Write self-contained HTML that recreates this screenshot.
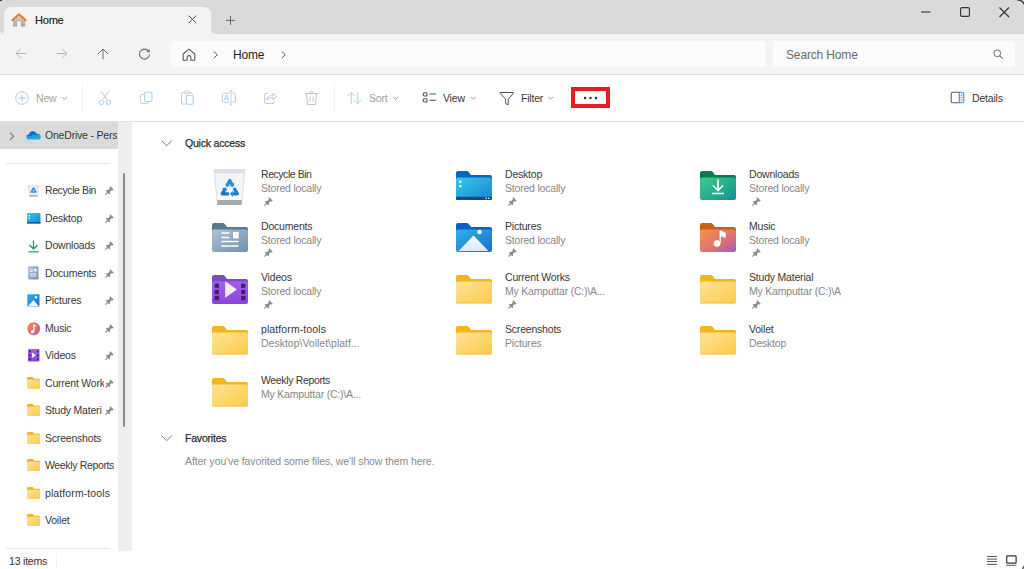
<!DOCTYPE html>
<html><head><meta charset="utf-8">
<style>
*{box-sizing:border-box;margin:0;padding:0}
html,body{width:1024px;height:569px;overflow:hidden;background:#fff}
body{position:relative;font-family:"Liberation Sans",sans-serif;font-size:10.5px;color:#383838;letter-spacing:-0.2px}
.a{position:absolute}
.t{position:absolute;white-space:nowrap;line-height:12px}
svg{position:absolute;overflow:visible}
#title{left:0;top:0;width:1024px;height:33px;background:#dadada}
#tab{left:4px;top:7px;width:207px;height:27px;background:#f3f3f3;border-radius:7px 7px 0 0}
#addrrow{left:0;top:34px;width:1024px;height:41px;background:#f3f3f3;border-bottom:1px solid #dcdcdc}
#addr{left:171px;top:40.7px;width:595px;height:26.7px;background:#fbfbfb;border-radius:4px}
#search{left:773px;top:40.7px;width:242px;height:26.7px;background:#fbfbfb;border-radius:4px}
#cmdline{left:0;top:121px;width:1024px;height:1px;background:#e0e0e0}
#odhl{left:0;top:122px;width:118px;height:27px;background:#dadada}
#track{left:118px;top:122px;width:14px;height:429px;background:#eeeeee}
#thumb{left:123px;top:173px;width:2px;height:254px;background:#8a8a8a;border-radius:1px}
.sep{position:absolute;background:#e3e3e3}
.gray{color:#a0a0a0}
.sb{-webkit-text-stroke:0.25px #1c1c1c}
.desc{color:#878787}
</style></head><body>
<svg width="0" height="0" style="position:absolute">
<defs>
 <linearGradient id="gYel" x1="0" y1="0" x2="1" y2="1"><stop offset="0" stop-color="#ffe39a"/><stop offset="1" stop-color="#fbca45"/></linearGradient>
 <linearGradient id="gDesk" x1="0" y1="0" x2="1" y2="1"><stop offset="0" stop-color="#35c9e6"/><stop offset="1" stop-color="#1b84d2"/></linearGradient>
 <linearGradient id="gDown" x1="0" y1="0" x2="1" y2="1"><stop offset="0" stop-color="#40c98c"/><stop offset="1" stop-color="#0f9390"/></linearGradient>
 <linearGradient id="gDoc" x1="0" y1="0" x2="1" y2="1"><stop offset="0" stop-color="#adc2d8"/><stop offset="1" stop-color="#7190ae"/></linearGradient>
 <linearGradient id="gPic" x1="0" y1="0" x2="1" y2="1"><stop offset="0" stop-color="#2fb1ec"/><stop offset="1" stop-color="#1670cc"/></linearGradient>
 <linearGradient id="gMus" x1="0" y1="0" x2="1" y2="1"><stop offset="0" stop-color="#f78f4c"/><stop offset="0.6" stop-color="#de7070"/><stop offset="1" stop-color="#9a5ac8"/></linearGradient>
 <linearGradient id="gVid" x1="0" y1="0" x2="0" y2="1"><stop offset="0" stop-color="#a660ea"/><stop offset="1" stop-color="#8a44dc"/></linearGradient>
 <linearGradient id="gMtn" x1="0" y1="0" x2="0" y2="1"><stop offset="0" stop-color="#ffffff"/><stop offset="1" stop-color="#d6e8f8"/></linearGradient>
 <linearGradient id="gBin" x1="0" y1="0" x2="0" y2="1"><stop offset="0" stop-color="#eef0f2"/><stop offset="1" stop-color="#fbfbfb"/></linearGradient>
 <linearGradient id="gCloud" x1="0.2" y1="0" x2="0.5" y2="1"><stop offset="0" stop-color="#0662bc"/><stop offset="0.5" stop-color="#0b78d4"/><stop offset="0.52" stop-color="#1e9ae6"/><stop offset="1" stop-color="#2aa8ec"/></linearGradient>
 <g id="backY"><path d="M0 2Q0 0 2 0H10.5Q12 0 13 1.2L15 4H34Q36 4 36 6V10H0Z"/></g>
 <g id="fold">
  <path d="M0 2Q0 0 2 0H10.5Q12 0 13 1.2L15 4H34Q36 4 36 6V10H0Z" fill="#f3b51c"/>
  <rect x="0" y="6.5" width="36" height="22" rx="2" fill="url(#gYel)"/>
  <rect x="0" y="27.5" width="36" height="1" rx="0.5" fill="#efb93a" opacity="0.6"/>
 </g>
 <g id="sfold">
  <path d="M0 1.2Q0 0 1.2 0H5Q6 0 6.5 0.8L7.2 1.8H12Q13 1.8 13 2.8V4H0Z" fill="#f3b51c"/>
  <rect x="0" y="2.8" width="13" height="9.2" rx="1" fill="url(#gYel)"/>
 </g>
 <g id="pin"><path d="M5.3 0.2L8.8 3.7L7.6 4.5L6.5 4.2L5 5.7L5.1 7.4L4.2 8.2L2.9 6.9L0.8 9L0 8.2L2.1 6.1L0.8 4.8L1.6 3.9L3.3 4L4.8 2.5L4.5 1.4Z" fill="#8c8c8c"/></g>
 <g id="chev"><path d="M0 0L2.5 2.3L5 0" fill="none" stroke="#9a9a9a" stroke-width="0.9"/></g>
</defs>
</svg>

<div id="title" class="a"></div>
<div id="addrrow" class="a"></div>
<div class="a" style="left:0;top:33px;width:1024px;height:1px;background:#d5d5d5"></div>
<div id="tab" class="a"></div>
<div id="addr" class="a"></div>
<div id="search" class="a"></div>
<div id="cmdline" class="a"></div>
<div id="odhl" class="a"></div>
<div id="track" class="a"></div>
<div id="thumb" class="a"></div>

<!-- ===== TITLE BAR ===== -->
<div class="a" style="left:0;top:0;width:2px;height:1px;background:#404040"></div>
<svg style="left:1014px;top:-1px" width="12" height="10" viewBox="0 0 12 10"><path d="M3 0.8Q9 1 10.6 6" fill="none" stroke="#303030" stroke-width="1.3"/></svg>
<svg style="left:0;top:28px" width="220" height="6" viewBox="0 0 220 6"><path d="M0 5.5V1A4 4 0 0 0 4 5V5.5Z" fill="#f3f3f3"/><path d="M211 5.5V1A4 4 0 0 0 215 5V5.5Z" fill="#f3f3f3"/></svg>
<svg style="left:11px;top:12px" width="16" height="16" viewBox="0 0 16 16">
 <defs><linearGradient id="gHouse" x1="0" y1="0" x2="0" y2="1"><stop offset="0" stop-color="#d8d8d8"/><stop offset="1" stop-color="#a2a2a2"/></linearGradient></defs>
 <path d="M2 7.8L8 2.8L14.2 7.8V14.6H9.9V9.6H6V14.6H2Z" fill="url(#gHouse)"/>
 <path d="M1.3 8.2L8 2.2L14.7 8.2" fill="none" stroke="#ee7a1c" stroke-width="1.9" stroke-linejoin="round" stroke-linecap="round"/>
</svg>
<div class="t" style="left:35px;top:14px;font-size:11px;color:#202020;-webkit-text-stroke:0.15px #202020">Home</div>
<svg style="left:188px;top:15px" width="9" height="9" viewBox="0 0 9 9"><path d="M0.6 0.6L8.2 8.2M8.2 0.6L0.6 8.2" stroke="#505050" stroke-width="1"/></svg>
<svg style="left:226px;top:16px" width="9" height="9" viewBox="0 0 9 9"><path d="M4.5 0V8.8M0 4.4H8.8" stroke="#5a5a5a" stroke-width="0.9"/></svg>
<svg style="left:921px;top:11px" width="10" height="2" viewBox="0 0 10 2"><path d="M0 1H9.5" stroke="#303030" stroke-width="1.1"/></svg>
<svg style="left:960px;top:7px" width="10" height="10" viewBox="0 0 10 10"><rect x="0.6" y="0.6" width="8.8" height="8.8" rx="1.3" fill="none" stroke="#303030" stroke-width="1.1"/></svg>
<svg style="left:999px;top:7px" width="11" height="11" viewBox="0 0 11 11"><path d="M0.5 0.5L10 10M10 0.5L0.5 10" stroke="#303030" stroke-width="1.1"/></svg>

<!-- ===== ADDRESS ROW ===== -->
<svg style="left:15px;top:48px" width="12" height="12" viewBox="0 0 12 12"><path d="M11.5 5.5H1.2M5.8 0.8L1 5.5L5.8 10.2" fill="none" stroke="#b4b4b4" stroke-width="1"/></svg>
<svg style="left:56px;top:48px" width="12" height="12" viewBox="0 0 12 12"><path d="M0.5 5.5H10.8M6.2 0.8L11 5.5L6.2 10.2" fill="none" stroke="#b4b4b4" stroke-width="1"/></svg>
<svg style="left:97px;top:48px" width="12" height="12" viewBox="0 0 12 12"><path d="M6 11V1.2M1 6L6 1L11 6" fill="none" stroke="#6a6a6a" stroke-width="1"/></svg>
<svg style="left:138px;top:48px" width="13" height="13" viewBox="0 0 13 13"><path d="M10.6 3.2A5 5 0 1 0 11.5 6.5" fill="none" stroke="#6a6a6a" stroke-width="1.1"/><path d="M11.6 1V4.3H8.3Z" fill="#6a6a6a"/></svg>
<svg style="left:182px;top:48px" width="14" height="14" viewBox="0 0 14 14"><path d="M1.2 12.2V6L7 1.2L12.8 6V12.2H8.8V8.8Q8.8 7.6 7 7.6Q5.2 7.6 5.2 8.8V12.2Z" fill="none" stroke="#5a5a5a" stroke-width="1.1" stroke-linejoin="round"/></svg>
<svg style="left:213px;top:51px" width="6" height="8" viewBox="0 0 6 8"><path d="M0.8 0.5L4.3 3.8L0.8 7.1" fill="none" stroke="#5a5a5a" stroke-width="1"/></svg>
<div class="t" style="left:233px;top:48.5px;font-size:12px;color:#1e1e1e">Home</div>
<svg style="left:281px;top:51px" width="6" height="8" viewBox="0 0 6 8"><path d="M0.8 0.5L4.3 3.8L0.8 7.1" fill="none" stroke="#5a5a5a" stroke-width="1"/></svg>
<div class="t" style="left:786px;top:48.7px;color:#6a6a6a;font-size:12px;letter-spacing:-0.15px">Search Home</div>
<svg style="left:993px;top:49px" width="11" height="11" viewBox="0 0 11 11"><circle cx="4.3" cy="4.3" r="3.4" fill="none" stroke="#707070" stroke-width="1"/><path d="M6.8 6.8L9.6 9.6" stroke="#707070" stroke-width="1.1"/></svg>

<!-- ===== COMMAND BAR ===== -->
<svg style="left:15px;top:91px" width="14" height="14" viewBox="0 0 14 14"><circle cx="7" cy="7" r="6.3" fill="none" stroke="#c4c4c4" stroke-width="1"/><path d="M7 3.5V10.5M3.5 7H10.5" stroke="#9ccbf0" stroke-width="1"/></svg>
<div class="t gray" style="left:36px;top:92px">New</div>
<svg style="left:62px;top:97px" width="6" height="4"><use href="#chev"/></svg>
<div class="sep" style="left:82px;top:84px;width:1px;height:28px;background:#f0f0f0"></div>
<!-- cut -->
<svg style="left:98px;top:90px" width="14" height="16" viewBox="0 0 14 16"><path d="M3 1.2L8.8 9M11 1.2L5.2 9" stroke="#c8c8c8" stroke-width="1"/><circle cx="3.5" cy="12.3" r="2.3" fill="none" stroke="#a8d0f2" stroke-width="1"/><circle cx="10.5" cy="12.3" r="2.3" fill="none" stroke="#a8d0f2" stroke-width="1"/></svg>
<!-- copy -->
<svg style="left:139px;top:91px" width="15" height="14" viewBox="0 0 15 14"><path d="M5 3.5H3Q1.5 3.5 1.5 5V10.8Q1.5 12.5 3.2 12.5H7.5Q9 12.5 9 11" fill="none" stroke="#c8c8c8" stroke-width="1"/><rect x="5.5" y="1.2" width="7.5" height="9.3" rx="1.6" fill="none" stroke="#a8d0f2" stroke-width="1.1"/></svg>
<!-- paste -->
<svg style="left:180px;top:90px" width="15" height="16" viewBox="0 0 15 16"><path d="M5 14H2.5Q1.5 14 1.5 13V3.5Q1.5 2.5 2.5 2.5H11Q12 2.5 12 3.5V4" fill="none" stroke="#c8c8c8" stroke-width="1"/><rect x="4.2" y="1.2" width="5" height="2.3" rx="1" fill="#fff" stroke="#c8c8c8" stroke-width="1"/><rect x="6.2" y="5.2" width="7" height="9" rx="1.3" fill="none" stroke="#a8d0f2" stroke-width="1.1"/></svg>
<!-- rename -->
<svg style="left:221px;top:90px" width="16" height="16" viewBox="0 0 16 16"><path d="M8.5 3.2H2.6Q1.3 3.2 1.3 4.5V11Q1.3 12.3 2.6 12.3H8.5M11.5 3.2H13Q14.4 3.2 14.4 4.5V11Q14.4 12.3 13 12.3H11.5" fill="none" stroke="#c8c8c8" stroke-width="1"/><path d="M3.3 10.5L5.5 4.8L7.7 10.5M4.1 8.6H6.9" fill="none" stroke="#a8d0f2" stroke-width="1"/><path d="M10 1V15M8.5 1H11.5M8.5 15H11.5" fill="none" stroke="#a8d0f2" stroke-width="1"/></svg>
<!-- share -->
<svg style="left:263px;top:91px" width="15" height="14" viewBox="0 0 15 14"><path d="M5 2.5H2.8Q1.5 2.5 1.5 3.8V11Q1.5 12.5 3 12.5H10Q11.3 12.5 11.3 11.2V10" fill="none" stroke="#c8c8c8" stroke-width="1"/><path d="M3.5 9Q4.5 4.5 10 4.5V2L13.5 5.5L10 9V6.6Q6 6.6 3.5 9Z" fill="none" stroke="#a8d0f2" stroke-width="1" stroke-linejoin="round"/></svg>
<!-- delete -->
<svg style="left:304px;top:90px" width="15" height="16" viewBox="0 0 15 16"><path d="M1 3.5H14M5.8 3.2Q5.8 1.5 7.5 1.5Q9.2 1.5 9.2 3.2M2.5 3.7L3.5 14.5H11.5L12.5 3.7M6 6.5V11.5M9 6.5V11.5" fill="none" stroke="#c4c4c4" stroke-width="1"/></svg>
<div class="sep" style="left:334px;top:84px;width:1px;height:28px;background:#f0f0f0"></div>
<!-- sort -->
<svg style="left:347px;top:91px" width="16" height="14" viewBox="0 0 16 14"><path d="M4.3 12.5V1.5M0.8 5L4.3 1.5L7.8 5" fill="none" stroke="#c8c8c8" stroke-width="1"/><path d="M10.8 1.5V12.5M7.3 9L10.8 12.5L14.3 9" fill="none" stroke="#a8d0f2" stroke-width="1"/></svg>
<div class="t gray" style="left:369px;top:92px">Sort</div>
<svg style="left:393px;top:97px" width="6" height="4"><use href="#chev"/></svg>
<!-- view -->
<svg style="left:422px;top:91px" width="15" height="13" viewBox="0 0 15 13"><rect x="1.3" y="1.8" width="3.7" height="3.2" rx="1" fill="none" stroke="#505050" stroke-width="1.1"/><rect x="1.3" y="7.8" width="3.7" height="3.2" rx="1" fill="none" stroke="#505050" stroke-width="1.1"/><path d="M7.5 3H14M7.5 9.3H14" stroke="#505050" stroke-width="1.1"/></svg>
<div class="t" style="left:443px;top:92px">View</div>
<svg style="left:471px;top:97px" width="6" height="4"><use href="#chev"/></svg>
<!-- filter -->
<svg style="left:499px;top:91px" width="16" height="15" viewBox="0 0 16 15"><path d="M1.3 1.5H14.3V2.6L9.2 8.2V13.8L6.6 12.6V8.2L1.3 2.6Z" fill="none" stroke="#505050" stroke-width="1" stroke-linejoin="round"/></svg>
<div class="t" style="left:521px;top:92px">Filter</div>
<svg style="left:548px;top:97px" width="6" height="4"><use href="#chev"/></svg>
<!-- more -->
<div class="sep" style="left:568px;top:84px;width:1px;height:27px;background:#f6f6f6"></div>
<div class="a" style="left:571px;top:87px;width:39px;height:21px;border:4px solid #ea1a22"></div>
<svg style="left:580px;top:94px" width="20" height="8" viewBox="0 0 20 8"><circle cx="5" cy="4" r="1.2" fill="#2a2a2a"/><circle cx="10.5" cy="4" r="1.2" fill="#2a2a2a"/><circle cx="16" cy="4" r="1.2" fill="#2a2a2a"/></svg>
<!-- details -->
<svg style="left:950px;top:91px" width="15" height="13" viewBox="0 0 15 13"><path d="M9.3 1.2H3Q1.2 1.2 1.2 3V10Q1.2 11.8 3 11.8H9.3" fill="none" stroke="#606060" stroke-width="1.1"/><path d="M9.3 1.2H12Q13.8 1.2 13.8 3V10Q13.8 11.8 12 11.8H9.3Z" fill="#eaf3fb" stroke="#3c8ee0" stroke-width="1.1"/><path d="M10.8 4H12.5M10.8 6.5H12.5M10.8 9H12.5" stroke="#3c8ee0" stroke-width="0.8"/></svg>
<div class="t" style="left:972px;top:92px">Details</div>

<!-- ===== NAV ===== -->
<svg style="left:9px;top:132px" width="6" height="9" viewBox="0 0 6 9"><path d="M1 0.6L4.6 4.2L1 7.8" fill="none" stroke="#7c7c7c" stroke-width="1.2"/></svg>
<svg style="left:26px;top:130px" width="15" height="10" viewBox="0 0 15 10"><path d="M3.2 9.6Q0.3 9.6 0.3 7.1Q0.3 4.6 3 4.6Q3.6 1.3 6.9 1.3Q9.4 1.3 10.4 3.6Q14.7 3.6 14.7 6.7Q14.7 9.6 11.7 9.6Z" fill="url(#gCloud)"/></svg>
<div class="t" style="left:45px;top:129px;width:72px;overflow:hidden">OneDrive - Personal</div>
<div class="sep" style="left:6px;top:163px;width:104px;height:1px"></div>

<!-- nav icons -->
<svg style="left:28px;top:185px" width="11" height="12" viewBox="0 0 11 12"><path d="M0.5 0.8H10.5L9.5 11.5H1.5Z" fill="#eef0f2" stroke="#c8ccd0" stroke-width="0.6"/><rect x="1.5" y="10.2" width="8" height="1.4" fill="#a8a8a8"/><path d="M5.5 3L3.1 7.1H7.9Z" fill="none" stroke="#3592e6" stroke-width="1.5" stroke-linejoin="round"/></svg>
<svg style="left:27px;top:213px" width="14" height="11" viewBox="0 0 14 11"><rect x="0" y="0" width="13.5" height="10.5" rx="1" fill="url(#gDesk)"/><rect x="0" y="9" width="13.5" height="1.5" fill="#0d5a9a"/><rect x="1.5" y="2" width="1.3" height="1.3" fill="#fff"/><rect x="1.5" y="4.5" width="1.3" height="1.3" fill="#fff"/></svg>
<svg style="left:28px;top:240px" width="11" height="13" viewBox="0 0 11 13"><path d="M5.5 0.5V8.8M1.5 5L5.5 9L9.5 5" fill="none" stroke="#1c9a6a" stroke-width="1.3"/><path d="M0.5 11.8H10.5" stroke="#2fb885" stroke-width="1.5"/></svg>
<svg style="left:28px;top:266px" width="11" height="14" viewBox="0 0 11 14"><rect x="0.2" y="0.2" width="10.3" height="13.3" rx="1" fill="url(#gDoc)"/><path d="M2 3.5H5M2 5.5H5M2 8H8.5M2 10H8.5" stroke="#fff" stroke-width="0.9"/><rect x="6" y="2.8" width="2.6" height="2.6" fill="#fff"/></svg>
<svg style="left:27px;top:294px" width="13" height="13" viewBox="0 0 13 13"><rect x="0.3" y="0.3" width="12.2" height="12.2" rx="1" fill="url(#gPic)"/><path d="M1 12.2L6.4 6L11.8 12.2Z" fill="#f3f8fd"/><circle cx="9" cy="3.3" r="1.2" fill="#fff"/></svg>
<svg style="left:27px;top:322px" width="14" height="14" viewBox="0 0 14 14"><circle cx="6.7" cy="6.7" r="6.5" fill="url(#gMus)"/><path d="M6.8 9.5V3.2L9.2 4" fill="none" stroke="#fff" stroke-width="1.2"/><circle cx="5.5" cy="9.7" r="1.6" fill="#fff"/></svg>
<svg style="left:28px;top:349px" width="12" height="13" viewBox="0 0 12 13"><rect x="0" y="0" width="11.5" height="12.5" rx="1" fill="url(#gVid)"/><rect x="1" y="1.5" width="1.6" height="1.8" fill="#3d2070"/><rect x="1" y="5.4" width="1.6" height="1.8" fill="#3d2070"/><rect x="1" y="9.3" width="1.6" height="1.8" fill="#3d2070"/><rect x="8.9" y="1.5" width="1.6" height="1.8" fill="#3d2070"/><rect x="8.9" y="5.4" width="1.6" height="1.8" fill="#3d2070"/><rect x="8.9" y="9.3" width="1.6" height="1.8" fill="#3d2070"/><path d="M4 3.5L8 6.3L4 9.1Z" fill="#fff"/></svg>
<svg style="left:27px;top:377px" width="13" height="12" viewBox="0 0 13 12"><use href="#sfold"/></svg>
<svg style="left:27px;top:404px" width="13" height="12" viewBox="0 0 13 12"><use href="#sfold"/></svg>
<svg style="left:27px;top:432px" width="13" height="12" viewBox="0 0 13 12"><use href="#sfold"/></svg>
<svg style="left:27px;top:459px" width="13" height="12" viewBox="0 0 13 12"><use href="#sfold"/></svg>
<svg style="left:27px;top:487px" width="13" height="12" viewBox="0 0 13 12"><use href="#sfold"/></svg>
<svg style="left:27px;top:514px" width="13" height="12" viewBox="0 0 13 12"><use href="#sfold"/></svg>

<div class="t" style="left:45px;top:184px;letter-spacing:-0.4px">Recycle Bin</div>
<div class="t" style="left:45px;top:212px">Desktop</div>
<div class="t" style="left:45px;top:239px">Downloads</div>
<div class="t" style="left:45px;top:267px">Documents</div>
<div class="t" style="left:45px;top:294px">Pictures</div>
<div class="t" style="left:45px;top:322px">Music</div>
<div class="t" style="left:45px;top:349px">Videos</div>
<div class="t" style="left:45px;top:377px;width:59px;overflow:hidden">Current Work</div>
<div class="t" style="left:45px;top:404px;width:59px;overflow:hidden">Study Materi</div>
<div class="t" style="left:45px;top:432px">Screenshots</div>
<div class="t" style="left:45px;top:459px;letter-spacing:-0.35px">Weekly Reports</div>
<div class="t" style="left:45px;top:487px;letter-spacing:0.1px">platform-tools</div>
<div class="t" style="left:45px;top:514px">Voilet</div>
<svg style="left:105px;top:186px" width="9" height="9" viewBox="0 0 9 9"><use href="#pin"/></svg>
<svg style="left:105px;top:214px" width="9" height="9" viewBox="0 0 9 9"><use href="#pin"/></svg>
<svg style="left:105px;top:241px" width="9" height="9" viewBox="0 0 9 9"><use href="#pin"/></svg>
<svg style="left:105px;top:269px" width="9" height="9" viewBox="0 0 9 9"><use href="#pin"/></svg>
<svg style="left:105px;top:296px" width="9" height="9" viewBox="0 0 9 9"><use href="#pin"/></svg>
<svg style="left:105px;top:324px" width="9" height="9" viewBox="0 0 9 9"><use href="#pin"/></svg>
<svg style="left:105px;top:351px" width="9" height="9" viewBox="0 0 9 9"><use href="#pin"/></svg>
<svg style="left:105px;top:379px" width="9" height="9" viewBox="0 0 9 9"><use href="#pin"/></svg>
<svg style="left:105px;top:406px" width="9" height="9" viewBox="0 0 9 9"><use href="#pin"/></svg>

<div class="sep" style="left:6px;top:548px;width:104px;height:1px"></div>
<div class="t" style="left:9px;top:555px;color:#303030">13 items</div>
<div class="sep" style="left:56px;top:554px;width:1px;height:14px;background:#f0f0f0"></div>
<!-- status view icons -->
<svg style="left:986px;top:555px" width="12" height="11" viewBox="0 0 12 11"><path d="M1 1.5H11M1 4.1H11M1 6.6H11M1 9.4H11" stroke="#404040" stroke-width="0.9"/></svg>
<svg style="left:1005px;top:554px" width="13" height="13" viewBox="0 0 13 13"><rect x="1.7" y="1.8" width="9.4" height="7.4" rx="0.6" fill="none" stroke="#353535" stroke-width="1.2"/><path d="M1.2 11.3H11.4" stroke="#606060" stroke-width="1"/></svg>
<svg style="left:1016px;top:560px" width="10" height="10" viewBox="0 0 10 10"><path d="M6.5 9.5Q7.5 6.5 9.5 4.5" fill="none" stroke="#505050" stroke-width="1.3"/></svg>
<div class="a" style="left:133px;top:122px;width:1px;height:429px;background:#f8f8f8"></div>
<!-- ===== MAIN ===== -->
<svg style="left:161px;top:140px" width="12" height="7" viewBox="0 0 12 7"><path d="M0.5 0.5L5.7 5.7L10.9 0.5" fill="none" stroke="#7a7a7a" stroke-width="1"/></svg>
<div class="t sb" style="left:185px;top:137px">Quick access</div>
<svg style="left:161px;top:435px" width="12" height="7" viewBox="0 0 12 7"><path d="M0.5 0.5L5.7 5.7L10.9 0.5" fill="none" stroke="#7a7a7a" stroke-width="1"/></svg>
<div class="t sb" style="left:185px;top:432px">Favorites</div>
<div class="t" style="left:185px;top:455px;color:#8a8a8a;letter-spacing:-0.1px">After you've favorited some files, we'll show them here.</div>

<!-- big icons -->
<svg style="left:213px;top:168px" width="33" height="38" viewBox="0 0 33 38">
 <path d="M1 1.5H32L28.5 36H4.5Z" fill="url(#gBin)" stroke="#d2d6da" stroke-width="0.8"/>
 <path d="M1 1.5H32L31.6 5H1.4Z" fill="#dde1e5"/>
 <rect x="4.3" y="32" width="24.4" height="5" fill="#a6a8aa"/>
 <g><path d="M13.50 18.41L16.80 12.60L19.05 16.56" fill="none" stroke="#1f8fe6" stroke-width="3.3" stroke-linejoin="round"/><path d="M16.35 18.09L20.43 18.99L21.75 15.03Z" fill="#1f8fe6"/><path d="M21.00 19.99L24.30 25.80L19.80 25.80" fill="none" stroke="#1a7fd6" stroke-width="3.3" stroke-linejoin="round"/><path d="M19.80 22.70L17.00 25.80L19.80 28.90Z" fill="#1a7fd6"/><path d="M15.90 25.80L9.30 25.80L11.55 21.84" fill="none" stroke="#1674cc" stroke-width="3.3" stroke-linejoin="round"/><path d="M14.25 23.37L12.93 19.41L8.85 20.31Z" fill="#1674cc"/></g>
</svg>
<svg style="left:455.5px;top:171px" width="37" height="30" viewBox="0 0 37 30"><path d="M0 2Q0 0 2 0H10.5Q12 0 13 1.2L15 4H34Q36 4 36 6V10H0Z" fill="#0b63c6"/><rect x="0" y="6.5" width="36" height="22.5" rx="2" fill="url(#gDesk)"/><rect x="0" y="25.8" width="36" height="3.2" rx="1" fill="#0c4f8e"/><rect x="3.2" y="9.5" width="2.3" height="2.3" fill="#fff"/><rect x="3.2" y="14" width="2.3" height="2.3" fill="#fff"/><rect x="29.5" y="26.6" width="1.4" height="1.4" fill="#d6ecfa"/><rect x="32" y="26.6" width="1.4" height="1.4" fill="#d6ecfa"/></svg>
<svg style="left:699.5px;top:171px" width="37" height="30" viewBox="0 0 37 30"><path d="M0 2Q0 0 2 0H10.5Q12 0 13 1.2L15 4H34Q36 4 36 6V10H0Z" fill="#0a7a52"/><rect x="0" y="6.5" width="36" height="22.5" rx="2" fill="url(#gDown)"/><path d="M18 8.5V19.5M13 14.5L18 19.5L23 14.5" fill="none" stroke="#fff" stroke-width="1.6"/><path d="M12 22.5H24" stroke="#fff" stroke-width="1.6"/></svg>

<svg style="left:211.5px;top:223px" width="37" height="30" viewBox="0 0 37 30"><path d="M0 2Q0 0 2 0H10.5Q12 0 13 1.2L15 4H34Q36 4 36 6V10H0Z" fill="#5b7a8a"/><rect x="0" y="6.5" width="36" height="22.5" rx="2" fill="url(#gDoc)"/><path d="M9.5 10H17.5M9.5 14.5H17.5M9.5 18.5H26.5M9.5 23H26.5" stroke="#fff" stroke-width="1.6"/><rect x="21" y="9" width="5.6" height="6.4" fill="#fff"/></svg>
<svg style="left:455.5px;top:223px" width="37" height="30" viewBox="0 0 37 30"><path d="M0 2Q0 0 2 0H10.5Q12 0 13 1.2L15 4H34Q36 4 36 6V10H0Z" fill="#0a62c4"/><rect x="0" y="6.5" width="36" height="22.5" rx="2" fill="url(#gPic)"/><path d="M2.5 28L17.5 12.5L32.5 28Z" fill="url(#gMtn)"/><circle cx="23.5" cy="9" r="2.3" fill="#fff"/></svg>
<svg style="left:699.5px;top:223px" width="37" height="30" viewBox="0 0 37 30"><path d="M0 2Q0 0 2 0H10.5Q12 0 13 1.2L15 4H34Q36 4 36 6V10H0Z" fill="#c8601c"/><rect x="0" y="6.5" width="36" height="22.5" rx="2" fill="url(#gMus)"/><path d="M20.2 20V7.8L25.2 10.2V14.2L21 12.5" fill="#fff" stroke="#fff" stroke-width="1.2" stroke-linejoin="round"/><circle cx="17" cy="20.5" r="3.3" fill="#fff"/></svg>

<svg style="left:211.5px;top:275px" width="37" height="30" viewBox="0 0 37 30"><path d="M0 2Q0 0 2 0H10.5Q12 0 13 1.2L15 4H34Q36 4 36 6V10H0Z" fill="#7a4cc4"/><rect x="0" y="6.5" width="36" height="22.5" rx="2" fill="url(#gVid)"/><g fill="#40206e"><rect x="2.6" y="8.6" width="4.3" height="4.3"/><rect x="2.6" y="14.8" width="4.3" height="4.3"/><rect x="2.6" y="20.9" width="4.3" height="4.3"/><rect x="29.1" y="8.6" width="4.3" height="4.3"/><rect x="29.1" y="14.8" width="4.3" height="4.3"/><rect x="29.1" y="20.9" width="4.3" height="4.3"/></g><path d="M13.2 6.2L24.8 14.5L13.2 22.8Z" fill="#f4f0fa" transform="translate(0 0)"/></svg>
<svg style="left:455.5px;top:275px" width="37" height="30" viewBox="0 0 37 30"><use href="#fold"/></svg>
<svg style="left:699.5px;top:275px" width="37" height="30" viewBox="0 0 37 30"><use href="#fold"/></svg>
<svg style="left:211.5px;top:326px" width="37" height="30" viewBox="0 0 37 30"><use href="#fold"/></svg>
<svg style="left:455.5px;top:326px" width="37" height="30" viewBox="0 0 37 30"><use href="#fold"/></svg>
<svg style="left:699.5px;top:326px" width="37" height="30" viewBox="0 0 37 30"><use href="#fold"/></svg>
<svg style="left:211.5px;top:378px" width="37" height="30" viewBox="0 0 37 30"><use href="#fold"/></svg>

<div class="t" style="left:261px;top:168px;letter-spacing:-0.45px">Recycle Bin</div>
<div class="t desc" style="left:261px;top:182px">Stored locally</div>
<div class="t" style="left:505px;top:168px">Desktop</div>
<div class="t desc" style="left:505px;top:182px">Stored locally</div>
<div class="t" style="left:749px;top:168px">Downloads</div>
<div class="t desc" style="left:749px;top:182px">Stored locally</div>

<div class="t" style="left:261px;top:220px">Documents</div>
<div class="t desc" style="left:261px;top:234px">Stored locally</div>
<div class="t" style="left:505px;top:220px">Pictures</div>
<div class="t desc" style="left:505px;top:234px">Stored locally</div>
<div class="t" style="left:749px;top:220px">Music</div>
<div class="t desc" style="left:749px;top:234px">Stored locally</div>

<div class="t" style="left:261px;top:271px">Videos</div>
<div class="t desc" style="left:261px;top:285px">Stored locally</div>
<div class="t" style="left:505px;top:271px">Current Works</div>
<div class="t desc" style="left:505px;top:285px">My Kamputtar (C:)\A...</div>
<div class="t" style="left:749px;top:271px">Study Material</div>
<div class="t desc" style="left:749px;top:285px">My Kamputtar (C:)\A</div>

<div class="t" style="left:261px;top:323px;letter-spacing:0.1px">platform-tools</div>
<div class="t desc" style="left:261px;top:337px;letter-spacing:0px">Desktop\Voilet\platf...</div>
<div class="t" style="left:505px;top:323px">Screenshots</div>
<div class="t desc" style="left:505px;top:337px">Pictures</div>
<div class="t" style="left:749px;top:323px">Voilet</div>
<div class="t desc" style="left:749px;top:337px">Desktop</div>

<div class="t" style="left:261px;top:374px;letter-spacing:-0.35px">Weekly Reports</div>
<div class="t desc" style="left:261px;top:388px">My Kamputtar (C:)\A...</div>

<!-- pins in grid -->
<svg style="left:264px;top:197px" width="9" height="9" viewBox="0 0 9 9"><use href="#pin"/></svg>
<svg style="left:508px;top:197px" width="9" height="9" viewBox="0 0 9 9"><use href="#pin"/></svg>
<svg style="left:752px;top:197px" width="9" height="9" viewBox="0 0 9 9"><use href="#pin"/></svg>
<svg style="left:264px;top:248px" width="9" height="9" viewBox="0 0 9 9"><use href="#pin"/></svg>
<svg style="left:508px;top:248px" width="9" height="9" viewBox="0 0 9 9"><use href="#pin"/></svg>
<svg style="left:752px;top:248px" width="9" height="9" viewBox="0 0 9 9"><use href="#pin"/></svg>
<svg style="left:264px;top:300px" width="9" height="9" viewBox="0 0 9 9"><use href="#pin"/></svg>
<svg style="left:508px;top:300px" width="9" height="9" viewBox="0 0 9 9"><use href="#pin"/></svg>
<svg style="left:752px;top:300px" width="9" height="9" viewBox="0 0 9 9"><use href="#pin"/></svg>
</body></html>
